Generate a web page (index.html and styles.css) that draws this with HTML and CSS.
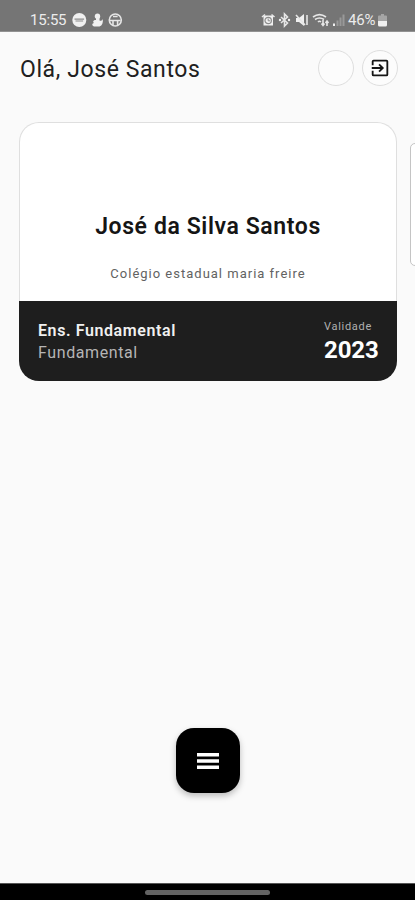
FILE: index.html
```html
<!DOCTYPE html>
<html lang="pt-BR">
<head>
<meta charset="utf-8">
<meta name="viewport" content="width=device-width, initial-scale=1">
<title>Carteira do estudante</title>
<link rel="stylesheet" href="styles.css">
</head>
<body>
<div class="screen">
  <div class="status-bar">
    <span class="time">15:55</span>
    <svg class="notices" width="52" height="16" viewBox="0 0 52 16" aria-hidden="true">
      <circle cx="7.3" cy="8" r="7"/>
      <path class="cut" d="M2.500 7.200h9.600M3.500 9h7.600"/>
      <circle cx="25.500" cy="4.300" r="2.700"/>
      <path d="M24 5h3.500v3.500c1.500.8 2.500 0 3.200-1.500.6 3.500-.4 6.500-3.200 7.500h-5.500c-2.500-1-2-3 0-3.500-1.500-1-1-3 2-3z"/>
      <circle class="line" cx="43.300" cy="8" r="6"/>
      <path class="line" d="M38 8.500h10.500M41 8.500v4.500M45.600 8.500v4.500M41 4.500h4.600"/>
    </svg>
    <svg class="signals" width="84" height="16" viewBox="0 0 84 16" aria-hidden="true">
      <path d="M2.500 3.500h9.500v10H2.500z"/>
      <path class="line" d="M1 5l3-2.500M13.500 5l-3-2.500"/>
      <circle class="cut" cx="7.200" cy="8.500" r="3.200"/>
      <path class="line thin" d="M7.200 6.500v2.300h2"/>
      <path class="line" d="M20 5l6.500 6-3 3V2l3 3-6.500 6"/>
      <circle cx="19" cy="8" r="1.200"/><circle cx="28" cy="8" r="1.200"/>
      <path d="M35 6h3l5-4v12l-5-4h-3z"/>
      <path class="line" d="M35 3l9 10M46 3v10"/>
      <path class="line" d="M52 5c4-3 9-3 13 0M54 7.500c3-2 6-2 9 0M57 10c1-1 2-1 3 0"/>
      <path class="line" d="M62 8v5.500M60.500 11.500l1.500 2 1.500-2M66 14V9M64.500 11L66 9l1.500 2"/>
      <path d="M72 11.500h2V14h-2z"/>
      <path class="faint" d="M75.500 8.500h2V14h-2zM78.500 5.500h2V14h-2zM81.500 2.500h2V14h-2z"/>
    </svg>
    <span class="percent">46%</span>
    <svg class="battery" width="9" height="14" viewBox="0 0 9 14" aria-hidden="true">
      <path class="level" d="M3 1h3v1.500h2q1 0 1 1V8H0V3.500q0-1 1-1h2z"/>
      <path d="M0 8h9v4q0 1.500-1.500 1.500h-6Q0 13.500 0 12z"/>
    </svg>
  </div>
  <header class="header">
    <h1 class="greeting">Olá, José Santos</h1>
    <div class="actions">
      <button class="round" aria-label="Perfil"></button>
      <button class="round" aria-label="Sair">
        <svg width="22" height="22" viewBox="0 0 24 24" aria-hidden="true">
          <path class="frame" d="M4 9V5q0-1 1-1h14q1 0 1 1v14q0 1-1 1H5q-1 0-1-1v-4"/>
          <path class="arrow" d="M3 12h12M11 8l4 4-4 4"/>
        </svg>
      </button>
    </div>
  </header>
  <main class="cards">
    <article class="card">
      <div class="card-top">
        <h2 class="name">José da Silva Santos</h2>
        <p class="school">Colégio estadual maria freire</p>
      </div>
      <div class="card-bottom">
        <div class="course">
          <strong class="level-name">Ens. Fundamental</strong>
          <span class="grade">Fundamental</span>
        </div>
        <div class="validity">
          <span class="validity-label">Validade</span>
          <strong class="year">2023</strong>
        </div>
      </div>
    </article>
    <article class="next-card"></article>
  </main>
  <button class="menu" aria-label="Menu">
    <svg width="22" height="16" viewBox="0 0 22 16" aria-hidden="true">
      <path d="M0 0h22v3.400H0zM0 6.300h22v3.400H0zM0 12.600h22V16H0z"/>
    </svg>
  </button>
  <div class="nav-bar"><span class="handle"></span></div>
</div>
</body>
</html>
```
FILE: styles.css
```css
* { box-sizing: border-box; }
body { margin: 0; font-family: Roboto, "Liberation Sans", sans-serif; background: #fafafa; }
h1, h2, p { margin: 0; }
button { padding: 0; border: 0; font: inherit; }
svg { display: block; flex: none; }

.screen { display: flex; flex-direction: column; height: 900px; overflow: hidden; }

.status-bar {
  display: flex; align-items: center; flex: none;
  height: 32px; padding: 9px 28px 0 30px;
  background: #757575; border-bottom: 1px solid #929292;
  color: #ececec; font-size: 15px;
}
.status-bar svg { fill: #f0f0f0; }
.status-bar .line { fill: none; stroke: #e6e6e6; stroke-width: 1.6; }
.status-bar .cut { fill: none; stroke: #8c8c8c; stroke-width: 1.2; }
.status-bar .thin { stroke: #8c8c8c; stroke-width: 1; }
.status-bar .faint { fill: #999; }
.status-bar .level { fill: #a5a5a5; }
.time { width: 42px; letter-spacing: -0.2px; }
.signals { margin-left: auto; }
.percent { width: 30px; margin-left: 3px; letter-spacing: -0.2px; }

.header {
  display: flex; justify-content: space-between; flex: none;
  height: 90px; padding: 18px 17px 0 20px;
}
.greeting { font-size: 23px; line-height: 39px; font-weight: 400; letter-spacing: 0.6px; color: #202020; white-space: nowrap; }
.actions { display: flex; gap: 8px; }
.round {
  display: flex; align-items: center; justify-content: center;
  width: 36px; height: 36px; border: 1px solid #dedede; border-radius: 50%;
  background: #fcfcfc;
}
.frame, .arrow { fill: none; stroke: #151515; stroke-width: 2; }

.cards { display: flex; align-items: flex-start; gap: 13px; padding-left: 19px; flex: 1; min-height: 0; }
.card { flex: none; width: 378px; height: 259px; }
.card-top {
  height: 179px; padding-top: 89px; text-align: center;
  border: 1px solid #dfdfdf; border-bottom: 0; border-radius: 20px 20px 0 0; background: #fff;
}
.name { font-size: 23px; line-height: 30px; font-weight: 600; letter-spacing: 0.6px; color: #151515; }
.school { margin-top: 22px; font-size: 13px; line-height: 20px; letter-spacing: 1px; color: #626262; }
.card-bottom {
  display: flex; justify-content: space-between;
  height: 80px; padding: 19px 18px 0 19px; border-radius: 0 0 20px 20px; background: #1e1e1e;
}
.course, .validity { display: flex; flex-direction: column; }
.level-name { font-size: 16px; line-height: 22px; font-weight: 600; letter-spacing: 0.6px; color: #f0f0f0; }
.grade { font-size: 16px; line-height: 22px; letter-spacing: 0.6px; color: #b5b5b5; }
.validity { width: 55px; }
.validity-label { font-size: 11px; line-height: 13px; letter-spacing: 0.7px; color: #b0b0b0; }
.year { font-size: 24px; line-height: 34px; font-weight: 700; letter-spacing: -0.1px; color: #fff; }
.next-card {
  flex: none; width: 340px; height: 123px; margin-top: 21px;
  border: 1px solid #c4c4c4; border-radius: 5px; background: #fff;
}

.menu {
  display: flex; align-items: center; justify-content: center; align-self: center; flex: none;
  width: 64px; height: 65px; margin-bottom: 90px; border-radius: 18px;
  background: #000; fill: #fff; box-shadow: 0 3px 6px rgba(0, 0, 0, 0.25);
}
.nav-bar {
  display: flex; justify-content: center; flex: none;
  height: 17px; padding-top: 6px; background: #000; border-top: 1px solid #555;
}
.handle { width: 125px; height: 5px; border-radius: 3px; background: #636363; }
```
